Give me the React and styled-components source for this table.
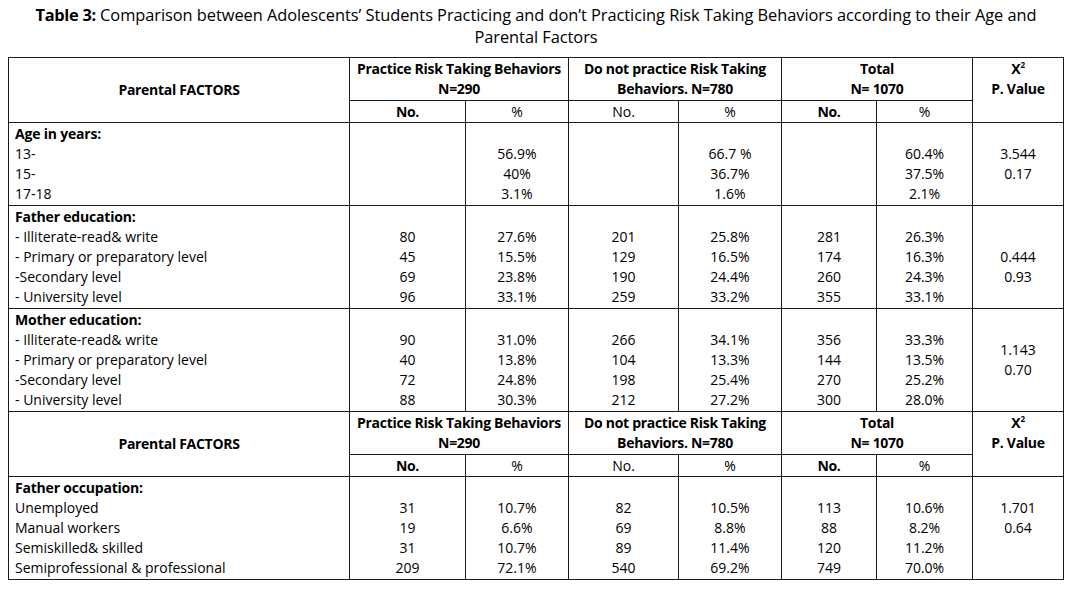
import React from "react";
import styled, { createGlobalStyle } from "styled-components";

const Global = createGlobalStyle`
  html, body { margin: 0; padding: 0; background: #fff; }
  body { padding: 0 6px 0 8px; font-family: "Open Sans", "Noto Sans", sans-serif; color: #000; }
`;

const Title = styled.div`
  text-align: center;
  font-size: 16.4px;
  line-height: 22px;
  padding: 4px 0 9px;
  letter-spacing: -0.05px;
  width: 1056px;
`;

const TitleLabel = styled.b`
  font-weight: 700;
  letter-spacing: -0.3px;
`;

const Table = styled.table`
  border-collapse: collapse;
  table-layout: fixed;
  width: 1056px;
  font-size: 14px;
  line-height: 20px;
  letter-spacing: 0;
`;

const Cell = styled.td`
  border: 1px solid #1a1a1a;
  padding: 1px 0 ${(p) => (p.$tight ? 0 : 1)}px;
  text-align: ${(p) => p.$align || "center"};
  vertical-align: ${(p) => p.$valign || "top"};
  font-weight: ${(p) => (p.$bold ? 700 : 400)};
  letter-spacing: ${(p) => (p.$bold ? "-0.3px" : "0")};
  padding-left: ${(p) => (p.$align === "left" ? "6px" : "0")};
`;

const HeadCell = styled(Cell)`
  font-weight: 700;
  letter-spacing: -0.3px;
`;

const Line = styled.div`
  height: 20px;
  white-space: nowrap;
  font-weight: ${(p) => (p.$bold ? 700 : "inherit")};
  letter-spacing: ${(p) => (p.$bold ? "-0.2px" : "inherit")};
`;

const Sup = styled.sup`
  font-size: 8px;
  vertical-align: 6px;
  line-height: 0;
`;

const Stack = styled.div`
  padding-top: ${(p) => (p.$offset || 0) * 20}px;
`;

const widths = [341, 116, 103, 110, 103, 95, 96, 91];

const sections1 = [
  {
    title: "Age in years:",
    items: ["13-", "15-", "17-18"],
    cols: [
      ["", "", ""],
      ["56.9%", "40%", "3.1%"],
      ["", "", ""],
      ["66.7 %", "36.7%", "1.6%"],
      ["", "", ""],
      ["60.4%", "37.5%", "2.1%"],
    ],
    p: ["3.544", "0.17"],
    pOffset: 1,
  },
  {
    title: "Father education:",
    items: [
      "- Illiterate-read& write",
      "- Primary or preparatory level",
      "-Secondary level",
      "- University level",
    ],
    cols: [
      ["80", "45", "69", "96"],
      ["27.6%", "15.5%", "23.8%", "33.1%"],
      ["201", "129", "190", "259"],
      ["25.8%", "16.5%", "24.4%", "33.2%"],
      ["281", "174", "260", "355"],
      ["26.3%", "16.3%", "24.3%", "33.1%"],
    ],
    p: ["0.444", "0.93"],
    pOffset: 2,
  },
  {
    title: "Mother education:",
    items: [
      "- Illiterate-read& write",
      "- Primary or preparatory level",
      "-Secondary level",
      "- University level",
    ],
    cols: [
      ["90", "40", "72", "88"],
      ["31.0%", "13.8%", "24.8%", "30.3%"],
      ["266", "104", "198", "212"],
      ["34.1%", "13.3%", "25.4%", "27.2%"],
      ["356", "144", "270", "300"],
      ["33.3%", "13.5%", "25.2%", "28.0%"],
    ],
    p: ["1.143", "0.70"],
    pOffset: 1.5,
  },
];

const sections2 = [
  {
    title: "Father occupation:",
    items: [
      "Unemployed",
      "Manual workers",
      "Semiskilled& skilled",
      "Semiprofessional & professional",
    ],
    cols: [
      ["31", "19", "31", "209"],
      ["10.7%", "6.6%", "10.7%", "72.1%"],
      ["82", "69", "89", "540"],
      ["10.5%", "8.8%", "11.4%", "69.2%"],
      ["113", "88", "120", "749"],
      ["10.6%", "8.2%", "11.2%", "70.0%"],
    ],
    p: ["1.701", "0.64"],
    pOffset: 1,
  },
];

function Header() {
  return (
    <>
      <tr>
        <HeadCell rowSpan={2} $valign="middle">Parental FACTORS</HeadCell>
        <HeadCell colSpan={2}>
          <Line>Practice Risk Taking Behaviors</Line>
          <Line>N=290</Line>
        </HeadCell>
        <HeadCell colSpan={2}>
          <Line>Do not practice Risk Taking</Line>
          <Line>Behaviors. N=780</Line>
        </HeadCell>
        <HeadCell colSpan={2}>
          <Line>Total</Line>
          <Line>N= 1070</Line>
        </HeadCell>
        <HeadCell rowSpan={2}>
          <Line>
            X<Sup>2</Sup>
          </Line>
          <Line>P. Value</Line>
        </HeadCell>
      </tr>
      <tr>
        <Cell $bold $tight>No.</Cell>
        <Cell $tight>%</Cell>
        <Cell $tight>No.</Cell>
        <Cell $tight>%</Cell>
        <Cell $bold $tight>No.</Cell>
        <Cell $tight>%</Cell>
      </tr>
    </>
  );
}

function Section({ s }) {
  return (
    <tr>
      <Cell $align="left">
        <Line $bold>{s.title}</Line>
        {s.items.map((t, i) => (
          <Line key={i}>{t}</Line>
        ))}
      </Cell>
      {s.cols.map((c, ci) => (
        <Cell key={ci}>
          <Line />
          {c.map((v, i) => (
            <Line key={i}>{v}</Line>
          ))}
        </Cell>
      ))}
      <Cell>
        <Stack $offset={s.pOffset}>
          {s.p.map((v, i) => (
            <Line key={i}>{v}</Line>
          ))}
        </Stack>
      </Cell>
    </tr>
  );
}

export default function App() {
  return (
    <>
      <Global />
      <Title>
        <TitleLabel>Table 3:</TitleLabel> Comparison between Adolescents’ Students Practicing and don’t Practicing Risk Taking Behaviors according to their Age and
        <br />
        Parental Factors
      </Title>
      <Table>
        <colgroup>
          {widths.map((w, i) => (
            <col key={i} style={{ width: w }} />
          ))}
        </colgroup>
        <tbody>
          <Header />
          {sections1.map((s, i) => (
            <Section key={i} s={s} />
          ))}
          <Header />
          {sections2.map((s, i) => (
            <Section key={i} s={s} />
          ))}
        </tbody>
      </Table>
    </>
  );
}
